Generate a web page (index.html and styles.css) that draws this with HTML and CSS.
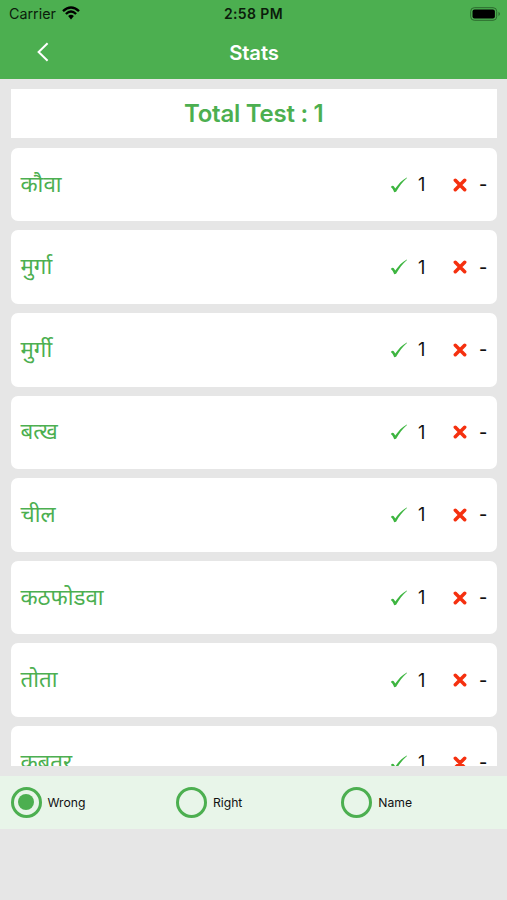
FILE: index.html
```html
<!DOCTYPE html>
<html lang="hi">
<head>
<meta charset="utf-8">
<title>Stats</title>
<link rel="stylesheet" href="styles.css">
</head>
<body>
<svg width="0" height="0" class="defs">
  <symbol id="check" viewBox="0 0 18 16"><path d="M.8 10C1.8 8.6 3.1 8.3 3.8 9.2L5.3 11.6C8.2 7 12.1 3 16.8.4L17 .9C12.6 4.6 9.1 9.3 6.1 14.8L4.2 15.2C3.5 13.2 2.4 11.1.8 10Z" fill="#3db540"/></symbol>
  <symbol id="cross" viewBox="0 0 14 14"><path d="M2.3 2.3 11.7 11.7M11.7 2.3 2.3 11.7" stroke="#f5300f" stroke-width="3.5" stroke-linecap="round"/></symbol>
</svg>
<header class="top">
  <div class="status">
    <div class="carrier"><span>Carrier</span>
      <svg class="wifi" viewBox="0 0 18 14"><path d="M1 5.1Q9-2.3 17 5.1M3.9 8Q9 3.2 14.1 8" fill="none" stroke="#000" stroke-width="2.4"/><path d="M6.1 10.1Q9 7.5 11.9 10.1L9 13.5Z"/></svg>
    </div>
    <span class="time">2:58 PM</span>
    <svg class="battery" viewBox="0 0 32 14"><rect x=".7" y=".7" width="26" height="12.6" rx="3.6" fill="none" stroke="#2c692e"/><rect x="2.5" y="2.5" width="22.4" height="9" rx="2"/><path d="M28.5 4.8Q31.4 7 28.5 9.2Z" fill="#2c692e"/></svg>
  </div>
  <div class="nav">
    <svg class="back" viewBox="0 0 12 20"><path d="M10.6 1.2 1.6 10 10.6 18.8" fill="none" stroke="#fff" stroke-width="2"/></svg>
    <h1>Stats</h1>
  </div>
</header>
<main>
  <div class="total"><span>Total Test : 1</span></div>
  <div class="list">
    <div class="card"><span class="word">कौवा</span><svg class="check"><use href="#check"/></svg><span class="right">1</span><svg class="cross"><use href="#cross"/></svg><span class="wrong">-</span></div>
    <div class="card"><span class="word">मुर्गा</span><svg class="check"><use href="#check"/></svg><span class="right">1</span><svg class="cross"><use href="#cross"/></svg><span class="wrong">-</span></div>
    <div class="card"><span class="word">मुर्गी</span><svg class="check"><use href="#check"/></svg><span class="right">1</span><svg class="cross"><use href="#cross"/></svg><span class="wrong">-</span></div>
    <div class="card"><span class="word">बत्ख</span><svg class="check"><use href="#check"/></svg><span class="right">1</span><svg class="cross"><use href="#cross"/></svg><span class="wrong">-</span></div>
    <div class="card"><span class="word">चील</span><svg class="check"><use href="#check"/></svg><span class="right">1</span><svg class="cross"><use href="#cross"/></svg><span class="wrong">-</span></div>
    <div class="card"><span class="word">कठफोडवा</span><svg class="check"><use href="#check"/></svg><span class="right">1</span><svg class="cross"><use href="#cross"/></svg><span class="wrong">-</span></div>
    <div class="card"><span class="word">तोता</span><svg class="check"><use href="#check"/></svg><span class="right">1</span><svg class="cross"><use href="#cross"/></svg><span class="wrong">-</span></div>
    <div class="card"><span class="word">कबूतर</span><svg class="check"><use href="#check"/></svg><span class="right">1</span><svg class="cross"><use href="#cross"/></svg><span class="wrong">-</span></div>
  </div>
</main>
<footer class="sort">
  <div class="option"><i class="radio selected"></i><span>Wrong</span></div>
  <div class="option"><i class="radio"></i><span>Right</span></div>
  <div class="option"><i class="radio"></i><span>Name</span></div>
</footer>
</body>
</html>
```
FILE: styles.css
```css
* { box-sizing: border-box; }
body { margin: 0; height: 900px; overflow: hidden; background: #e6e6e6; font-family: Inter, "Noto Sans", "Noto Sans Devanagari", sans-serif; color: #111; }
svg { display: block; flex: none; }
.defs { display: none; }
.top { height: 79.3px; background: #4caf50; }
.status { height: 27px; display: grid; grid-template-columns: 1fr auto 1fr; align-items: center; padding: 0 5px; color: #0b1c0b; }
.carrier { display: flex; align-items: center; gap: 6px; padding-left: 4px; font-size: 14.3px; }
.wifi { width: 18px; height: 14px; margin-top: -2px; }
.time { font-size: 14px; font-weight: 600; letter-spacing: .4px; }
.battery { width: 32px; height: 14px; justify-self: end; }
.nav { height: 50px; display: grid; grid-template-columns: 1fr auto 1fr; align-items: center; padding: 0 36px 0 37px; }
.back { width: 12px; height: 20px; }
h1 { margin: 0; font-size: 20.3px; font-weight: 600; letter-spacing: -.1px; color: #fff; }
main { padding: 9.4px 10px 0 10.5px; }
.total { height: 49px; background: #fff; display: flex; align-items: center; justify-content: center; color: #4caf50; font-size: 24px; font-weight: 600; letter-spacing: -.25px; }
.list { height: 628.3px; padding-top: 10.1px; display: flex; flex-direction: column; gap: 9.12px; overflow: hidden; }
.card { height: 73.5px; flex: none; background: #fff; border-radius: 7px; display: flex; align-items: center; padding: 0 10px; }
.word { flex: 1; padding-top: 4px; color: #4caf50; font-family: "Noto Sans Devanagari", "Noto Sans", sans-serif; font-size: 22.3px; line-height: 36px; }
.check { width: 18px; height: 16px; }
.right, .wrong { padding-top: 1px; font-size: 18px; line-height: 24px; }
.right { width: 9px; margin-left: 10px; }
.cross { width: 14px; height: 14px; margin-left: 26px; }
.wrong { width: 8px; margin-left: 12px; font-weight: 500; }
.sort { height: 53px; margin-top: 10px; padding-left: 10.5px; background: #e8f5e9; display: flex; align-items: center; }
.option { width: 165.4px; display: flex; align-items: center; gap: 6px; font-size: 12.2px; }
.radio { width: 31px; height: 31px; border: 3px solid #4caf50; border-radius: 50%; display: grid; place-items: center; }
.selected::after { content: ""; width: 16px; height: 16px; border-radius: 50%; background: #4caf50; }
```
